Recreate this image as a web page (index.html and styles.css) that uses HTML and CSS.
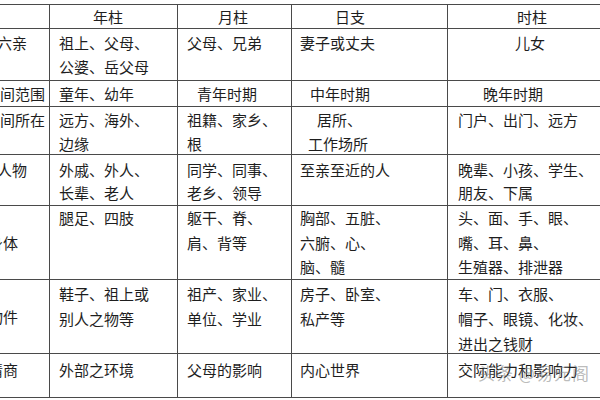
FILE: index.html
```html
<!DOCTYPE html>
<html lang="zh">
<head>
<meta charset="utf-8">
<link rel="stylesheet" href="styles.css">
</head>
<body>
<div class="sheet">
  <div class="grid">
    <div class="c lab"></div>
    <div class="c h h2">年柱</div>
    <div class="c h h3">月柱</div>
    <div class="c h h4">日支</div>
    <div class="c h h5">时柱</div>

    <div class="c lab r1 pr22">六亲</div>
    <div class="c r1 k2">祖上、父母、<br>公婆、岳父母</div>
    <div class="c r1 k3">父母、兄弟</div>
    <div class="c r1 k4">妻子或丈夫</div>
    <div class="c r1 k5 son">儿女</div>

    <div class="c lab r2 pr4">时间范围</div>
    <div class="c r2 k2">童年、幼年</div>
    <div class="c r2 k3 young">青年时期</div>
    <div class="c r2 k4 mid">中年时期</div>
    <div class="c r2 k5 old">晚年时期</div>

    <div class="c lab r3 pr4">空间所在</div>
    <div class="c r3 k2">远方、海外、<br>边缘</div>
    <div class="c r3 k3">祖籍、家乡、<br>根</div>
    <div class="c r3 k4 home"><span class="l1">居所、</span><span class="l2">工作场所</span></div>
    <div class="c r3 k5">门户、出门、远方</div>

    <div class="c lab r4 pr22">人物</div>
    <div class="c r4 k2">外戚、外人、<br>长辈、老人</div>
    <div class="c r4 k3">同学、同事、<br>老乡、领导</div>
    <div class="c r4 k4">至亲至近的人</div>
    <div class="c r4 k5">晚辈、小孩、学生、<br>朋友、下属</div>

    <div class="c lab mid-v pr31">身体</div>
    <div class="c r5 k2">腿足、四肢</div>
    <div class="c r5 k3">躯干、脊、<br>肩、背等</div>
    <div class="c r5 k4">胸部、五脏、<br>六腑、心、<br>脑、髓</div>
    <div class="c r5 k5">头、面、手、眼、<br>嘴、耳、鼻、<br>生殖器、排泄器</div>

    <div class="c lab mid-v pr31">物件</div>
    <div class="c r6 k2">鞋子、祖上或<br>别人之物等</div>
    <div class="c r6 k3">祖产、家业、<br>单位、学业</div>
    <div class="c r6 k4">房子、卧室、<br>私产等</div>
    <div class="c r6 k5">车、门、衣服、<br>帽子、眼镜、化妆、<br>进出之钱财</div>

    <div class="c lab r7 pr31">情商</div>
    <div class="c r7 k2">外部之环境</div>
    <div class="c r7 k3">父母的影响</div>
    <div class="c r7 k4">内心世界</div>
    <div class="c r7 k5 wm-cell">交际能力和影响力<span class="wm">头条 @易元阁</span></div>
  </div>
</div>
</body>
</html>
```

FILE: styles.css
```css
html, body {
  margin: 0;
  padding: 0;
  background: #ffffff;
}
body {
  width: 600px;
  height: 400px;
  overflow: hidden;
  font-family: "Noto Sans CJK SC", "Noto Sans", sans-serif;
  font-size: 15px;
  color: #1e1e1e;
}
.sheet {
  padding-top: 4px;
  margin-left: -32px;
}
.grid {
  display: grid;
  width: 655px;
  grid-template-columns: 80px 127px 113px 155px 172px;
  grid-template-rows: 23px 51px 25px 47px 50px 73px 73px 43px;
  gap: 1px;
  padding: 1px;
  background: #4a4a4a;
}
.c {
  background: #ffffff;
  line-height: 24px;
  white-space: nowrap;
  overflow: hidden;
}
.h { line-height: 23px; }
.h2 { padding-left: 43px; }
.h3 { padding-left: 40px; }
.h4 { padding-left: 43px; }
.h5 { padding-left: 69px; }

.lab { text-align: right; }
.pr4 { padding-right: 4px; }
.pr22 { padding-right: 22px; }
.pr31 { padding-right: 31px; }
.mid-v {
  display: flex;
  align-items: center;
  justify-content: flex-end;
}

.k2 { padding-left: 9px; }
.k3 { padding-left: 9px; }
.k4 { padding-left: 8px; }
.k5 { padding-left: 10px; }

.r1 { padding-top: 2px; }
.r2 { padding-top: 0; line-height: 25px; }
.r3 { padding-top: 1px; line-height: 23.5px; }
.r4 { padding-top: 3px; line-height: 23px; }
.r5 { padding-top: 0; line-height: 24.5px; }
.r6 { padding-top: 1px; line-height: 25px; }
.r7 { padding-top: 4px; }

.son { padding-left: 67px; }
.young { padding-left: 19px; }
.mid { padding-left: 18px; }
.old { padding-left: 35px; }
.home { padding-left: 0; }
.home .l1 { display: block; padding-left: 25px; }
.home .l2 { display: block; padding-left: 16px; }

.wm-cell { position: relative; }
.wm {
  position: absolute;
  left: 30px;
  top: 7px;
  font-size: 17px;
  color: rgba(130, 130, 130, 0.55);
  letter-spacing: 1px;
}
```
